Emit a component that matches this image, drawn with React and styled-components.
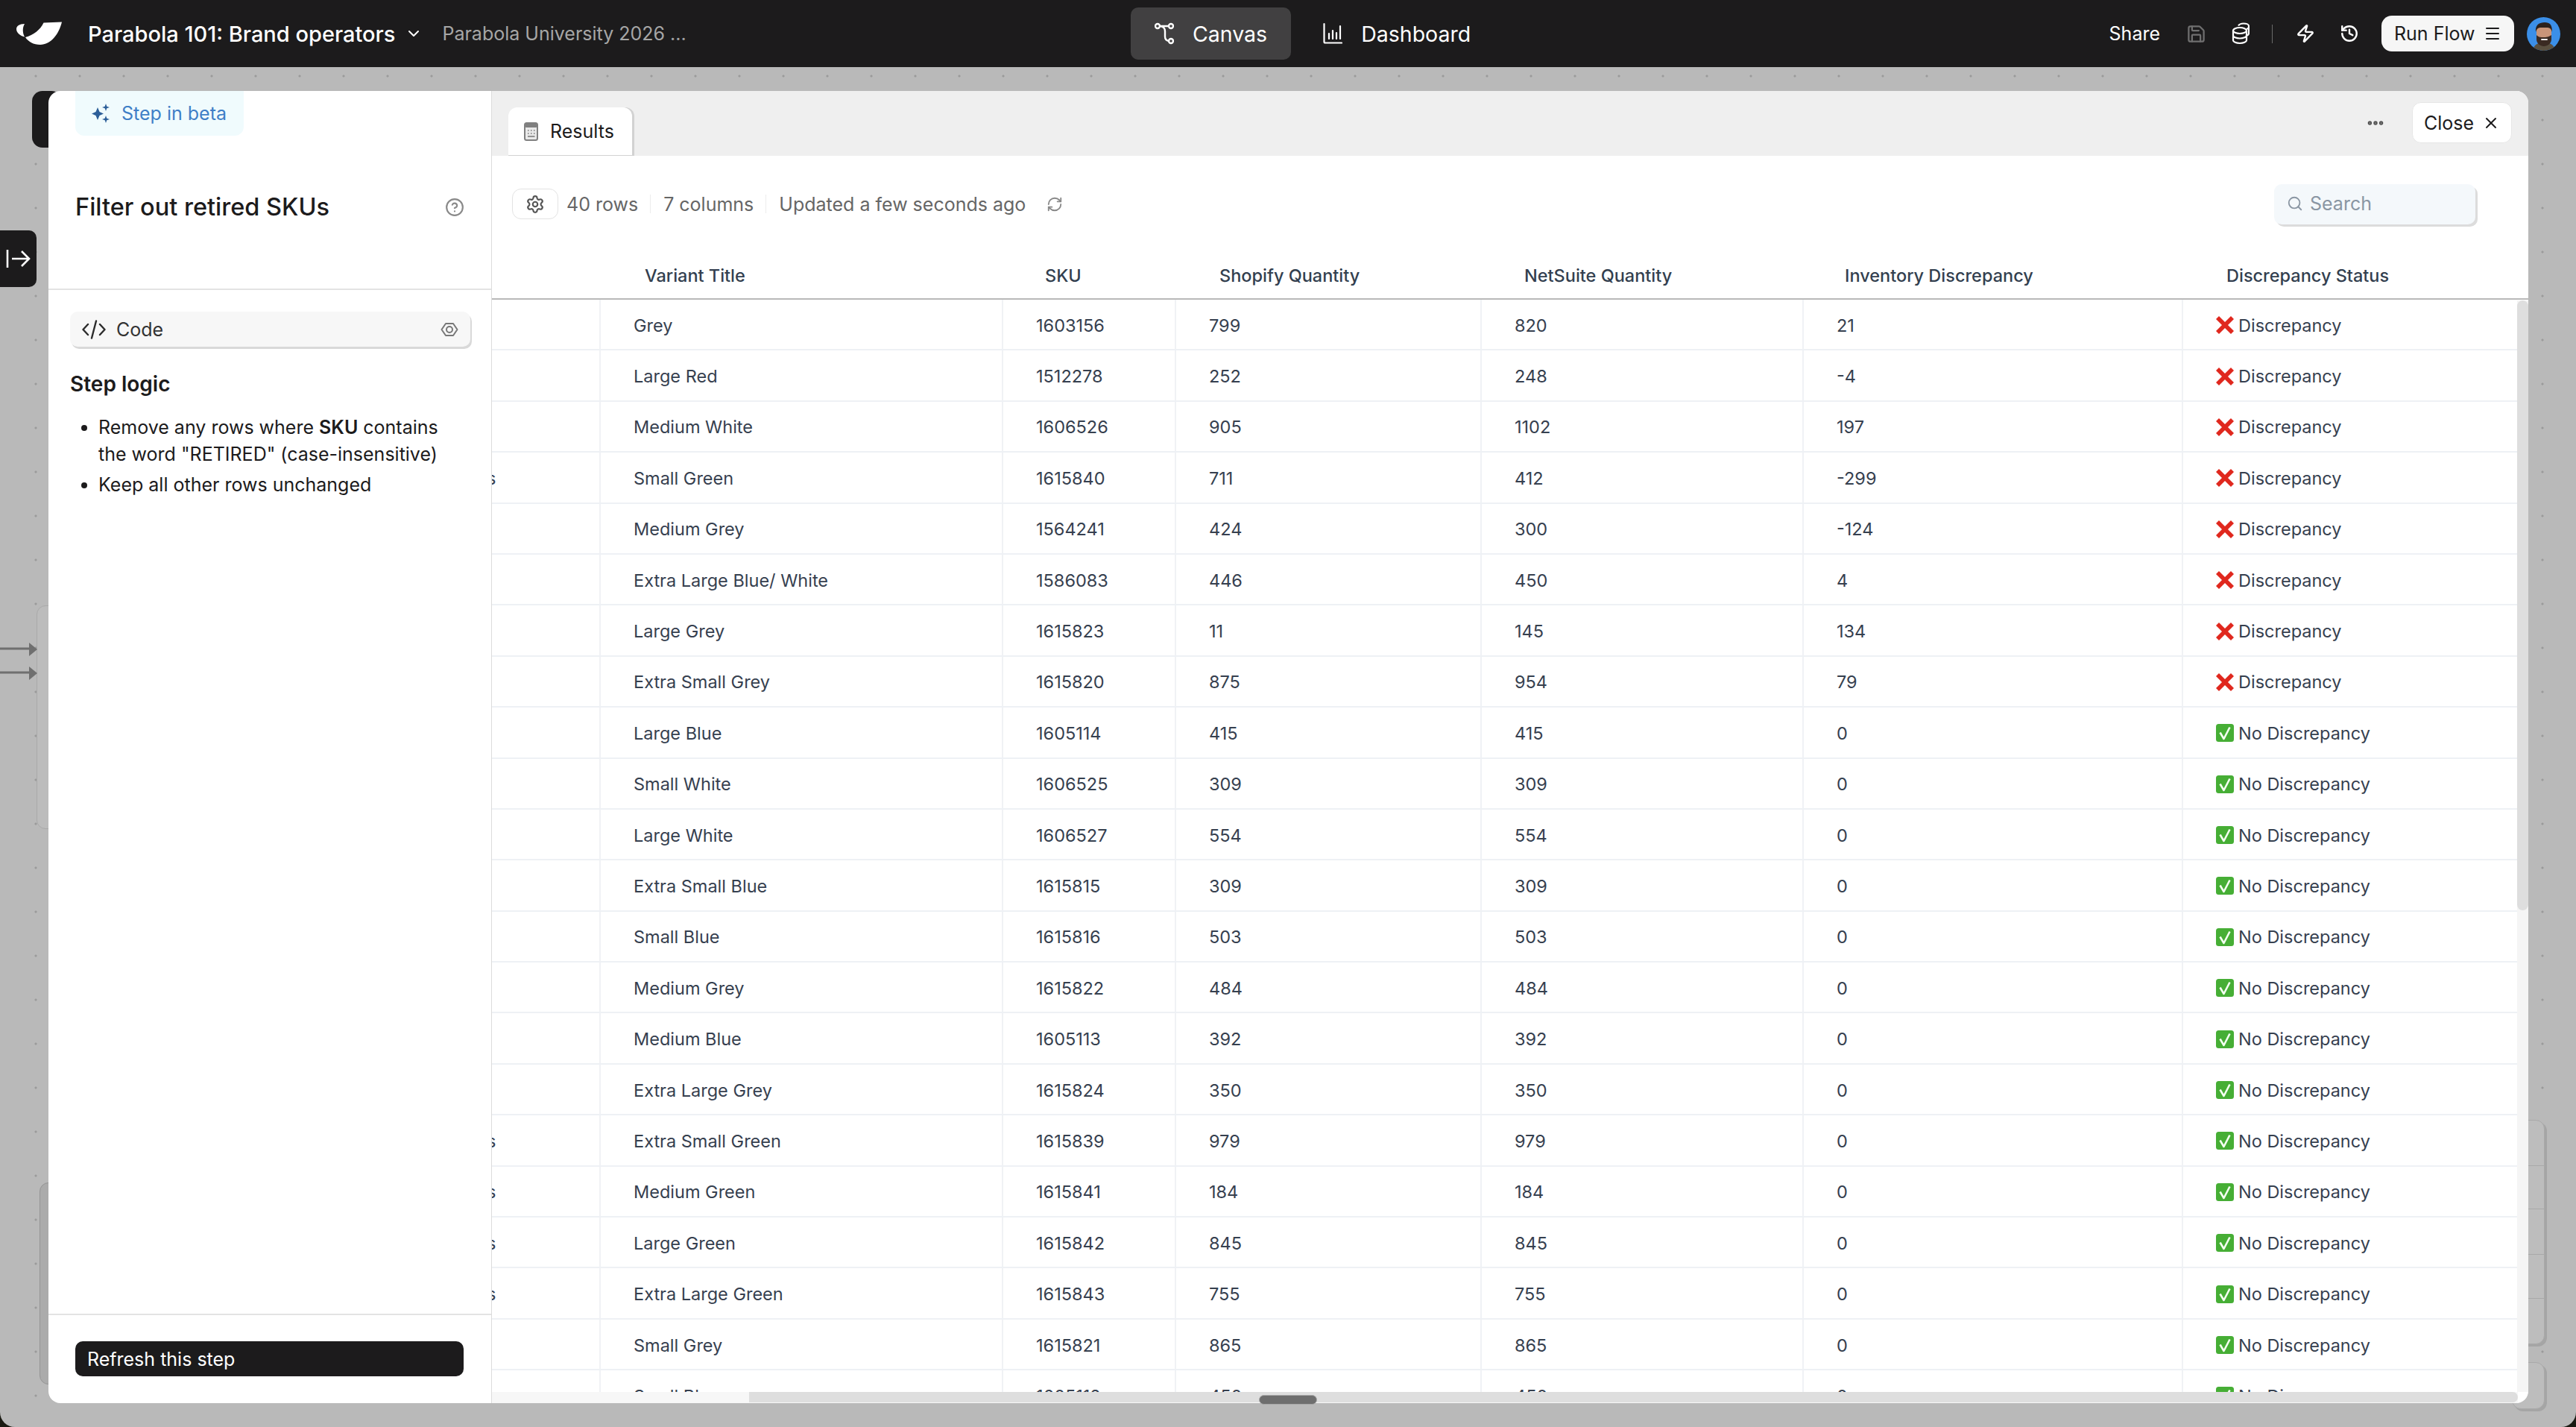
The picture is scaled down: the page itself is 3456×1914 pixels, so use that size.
import React from 'react';
import styled, { createGlobalStyle } from 'styled-components';
import { ChevronDown, Save, Zap, History, Menu, X, Settings, RefreshCw, Search, CircleHelp, MoreHorizontal } from 'lucide-react';

const GlobalStyle = createGlobalStyle`
  html, body { margin: 0; padding: 0; background: #1a1a12; }
  body { font-family: Inter, "Noto Sans", sans-serif; }
  * { box-sizing: border-box; }
`;

const Page = styled.div`
  position: relative;
  width: 3456px;
  height: 1914px;
  display: flex;
  flex-direction: column;
  overflow: hidden;
`;

const Header = styled.header`
  height: 90px;
  flex: none;
  background: #1c1b1c;
  color: #fff;
  display: grid;
  grid-template-columns: 1517px auto 1fr;
  align-items: center;
`;

const Brand = styled.div`
  display: flex;
  align-items: center;
  padding-left: 21px;
`;

const LogoSvg = styled.svg`
  width: 64px;
  height: 34px;
  margin-right: 33px;
`;

const ProjectName = styled.span`
  font-size: 29px;
  font-weight: 500;
  white-space: nowrap;
`;

const ProjectChevron = styled(ChevronDown)`
  margin-left: 13px;
`;

const FolderName = styled.span`
  font-size: 25px;
  color: #a6a6a6;
  margin-left: 26px;
  white-space: nowrap;
`;

const Tabs = styled.nav`
  display: flex;
  align-items: center;
  gap: 11px;
`;

const TabItem = styled.div`
  height: 70px;
  display: flex;
  align-items: center;
  gap: 25px;
  padding: 0 32px;
  border-radius: 10px;
  font-size: 28.5px;
  background: ${(p) => (p.$active ? '#414041' : 'transparent')};
`;

const Actions = styled.div`
  display: flex;
  align-items: center;
  justify-content: flex-end;
  padding-right: 21px;
`;

const ShareLabel = styled.span`
  font-size: 25px;
  margin-right: 35px;
`;

const ActionIcon = styled.span`
  display: flex;
  color: ${(p) => (p.$muted ? '#6f6f6f' : '#fff')};
  margin-right: ${(p) => p.$gap || 0}px;
`;

const ActionDivider = styled.span`
  width: 1px;
  height: 25px;
  background: #6a6a6a;
  margin-right: 31px;
`;

const RunButton = styled.div`
  width: 178px;
  height: 48px;
  margin-right: 17px;
  border-radius: 14px;
  background: #f6f6f6;
  color: #1c1b1c;
  font-size: 25px;
  display: flex;
  align-items: center;
  justify-content: space-between;
  padding: 0 17px;
`;

const Canvas = styled.main`
  flex: 1;
  position: relative;
  overflow: hidden;
  border-radius: 0 0 20px 20px;
  background-color: #b9b9b9;
  background-image: radial-gradient(circle at 48px 12px, #9a9a9a 1.2px, transparent 1.9px);
  background-size: 59px 59px;
`;

const CanvasBlock = styled.div`
  position: absolute;
  left: ${(p) => p.$x}px;
  top: ${(p) => p.$y}px;
  width: ${(p) => p.$w}px;
  height: ${(p) => p.$h}px;
  background: ${(p) => p.$bg || '#bdbdbd'};
  border: ${(p) => p.$line || '1px solid #a9a9a9'};
  border-radius: ${(p) => p.$radius || '12px'};
  box-shadow: ${(p) => p.$shadow || 'none'};
  display: flex;
  align-items: center;
  justify-content: center;
`;

const CanvasRule = styled.div`
  position: absolute;
  left: 0;
  right: 0;
  top: ${(p) => p.$y}px;
  height: 1px;
  background: #a9a9a9;
`;

const ArrowLine = styled.svg`
  position: absolute;
  left: 0;
  top: ${(p) => p.$y}px;
`;

const ToggleIcon = styled.svg`
  margin-left: 10px;
`;

const Modal = styled.section`
  position: absolute;
  left: 65px;
  top: 32px;
  right: 64px;
  bottom: 32px;
  display: flex;
  background: #fff;
  border-radius: 16px;
  overflow: hidden;
`;

const StepPanel = styled.aside`
  width: 595px;
  flex: none;
  display: flex;
  flex-direction: column;
  border-right: 1px solid #dcdcdc;
`;

const StepHead = styled.div`
  height: 267px;
  flex: none;
  border-bottom: 2px solid #e3e3e3;
  padding: 0 36px;
`;

const BetaChip = styled.div`
  width: 226px;
  height: 60px;
  background: #f0fbfd;
  border-radius: 0 0 12px 12px;
  display: flex;
  align-items: center;
  gap: 15px;
  padding-left: 21px;
  color: #3f7fc7;
  font-size: 25px;
`;

const TitleRow = styled.div`
  display: flex;
  align-items: center;
  justify-content: space-between;
  margin-top: 76px;
`;

const StepTitle = styled.h2`
  margin: 0;
  font-size: 32.5px;
  font-weight: 500;
  color: #1c1b1c;
`;

const StepBody = styled.div`
  flex: 1;
  padding: 29px 28px 0 29px;
`;

const CodeBar = styled.div`
  height: 47px;
  background: #f7f7f7;
  border-radius: 10px;
  box-shadow: 2px 3px 0 #d9d9d9;
  display: flex;
  align-items: center;
  padding: 0 16px;
  gap: 14px;
  font-size: 25px;
  color: #333;
`;

const CodeLabel = styled.span`
  flex: 1;
`;

const LogicTitle = styled.h3`
  margin: 33px 0 0;
  font-size: 28px;
  line-height: 34px;
  font-weight: 600;
  color: #1c1b1c;
`;

const LogicList = styled.ul`
  margin: 23px 0 0;
  padding: 0 0 0 38px;
  font-size: 25px;
  line-height: 36px;
  color: #1c1b1c;

  li + li {
    margin-top: 5px;
  }

  b {
    font-weight: 600;
  }
`;

const StepFoot = styled.div`
  height: 120px;
  flex: none;
  border-top: 2px solid #e3e3e3;
  padding: 35px 37px 0 36px;
`;

const RefreshButton = styled.div`
  height: 47px;
  background: #1c1b1c;
  border-radius: 10px;
  color: #fff;
  font-size: 25px;
  display: flex;
  align-items: center;
  padding-left: 16px;
`;

const ResultPanel = styled.div`
  flex: 1;
  min-width: 0;
  display: flex;
  flex-direction: column;
  position: relative;
`;

const ResultBar = styled.div`
  height: 87px;
  flex: none;
  background: #efefef;
  display: flex;
  align-items: flex-end;
  padding-left: 22px;
  padding-right: 22px;
`;

const ResultTab = styled.div`
  width: 166px;
  height: 65px;
  background: #fff;
  border-radius: 12px 12px 0 0;
  box-shadow: 3px 0 0 #d2d2d2;
  border-bottom: 1px solid #d2d2d2;
  display: flex;
  align-items: center;
  gap: 16px;
  padding-left: 21px;
  font-size: 25px;
  color: #1c1b1c;
`;

const BarEnd = styled.div`
  margin-left: auto;
  align-self: flex-start;
  margin-top: 15px;
  display: flex;
  align-items: center;
  gap: 36px;
  color: #555;
`;

const CloseButton = styled.div`
  width: 134px;
  height: 55px;
  background: #fff;
  border: 1px solid #e6e6e6;
  border-radius: 12px;
  display: flex;
  align-items: center;
  justify-content: space-between;
  padding: 0 15px;
  color: #1c1b1c;
  font-size: 25px;
`;

const Toolbar = styled.div`
  height: 129px;
  flex: none;
  display: flex;
  align-items: center;
  padding: 0 71px 0 27px;
  color: #666;
  font-size: 25px;
`;

const GearButton = styled.div`
  width: 62px;
  height: 41px;
  border: 1px solid #e3e3e3;
  border-radius: 12px;
  display: flex;
  align-items: center;
  justify-content: center;
  color: #555;
  margin-right: 11px;
`;

const Meta = styled.span`
  white-space: nowrap;
`;

const MetaRule = styled.span`
  width: 1px;
  height: 25px;
  background: #ececec;
  margin: 0 17px 0 16px;
`;

const ReloadIcon = styled(RefreshCw)`
  margin-left: 28px;
  color: #888;
`;

const SearchBox = styled.div`
  margin-left: auto;
  width: 270px;
  height: 54px;
  background: #f4f8fb;
  border-radius: 10px;
  box-shadow: 3px 3px 0 #dcdcdc;
  display: flex;
  align-items: center;
  gap: 9px;
  padding-left: 17px;
  padding-bottom: 1px;
  color: #8a96a3;
`;

const COLUMNS = '144px 540px 232px 410px 432px 509px 450px';

const HeadRow = styled.div`
  height: 64px;
  flex: none;
  display: grid;
  grid-template-columns: ${COLUMNS};
  border-bottom: 2px solid #b9b9b9;
  font-size: 23.5px;
  font-weight: 500;
  color: #333f4f;
  align-items: center;
`;

const HeadCell = styled.div`
  padding-left: ${(p) => p.$pad}px;
  white-space: nowrap;
`;

const TableBody = styled.div`
  height: 1465px;
  overflow: hidden;
`;

const Row = styled.div`
  width: 2717px;
  height: 68.4px;
  display: grid;
  grid-template-columns: ${COLUMNS};
  border-bottom: 2px solid #eef1f5;
  font-size: 23.5px;
  color: #36404f;
`;

const Cell = styled.div`
  display: flex;
  align-items: center;
  gap: 6px;
  padding: 2px 0 0 44px;
  border-left: 2px solid #f0f2f5;
  white-space: nowrap;
`;

const ClippedCell = styled.div`
  display: flex;
  align-items: center;
  overflow: hidden;
  padding-top: 2px;
  text-indent: -7px;
`;

const ScrollTrackY = styled.div`
  position: absolute;
  right: 0;
  top: 281px;
  bottom: 15px;
  width: 15px;
  background: #f5f5f5;
`;

const ScrollThumbY = styled.div`
  height: 818px;
  background: #dedede;
  border-radius: 8px;
`;

const ScrollTrackX = styled.div`
  position: absolute;
  left: 0;
  right: 14px;
  bottom: 0;
  height: 15px;
  background: #f7f7f7;
`;

const ScrollRail = styled.div`
  position: absolute;
  left: 345px;
  right: 0;
  top: 0;
  bottom: 1px;
  background: #dedede;
  border-radius: 0 8px 8px 0;
`;

const ScrollThumbX = styled.div`
  position: absolute;
  left: 1689px;
  top: 1871px;
  width: 78px;
  height: 13px;
  background: #6e6e6e;
  border: 1px solid #a8a8a8;
  border-radius: 7px;
`;

const Logo = () => (
  <LogoSvg viewBox="0 0 64 34">
    <path fill="#fff" d="M62 1.5 L37.5 2.5 C33 12 24 19 13 22 C17 28 24 32 33 32 C47 32 58 18 62 1.5 Z" />
    <path fill="#fff" d="M12 4 C5 4 1 7 1 11 C1 16 6 20 12 21.5 C9 16 9 9 12 4 Z" />
  </LogoSvg>
);

const CanvasIcon = () => (
  <svg width="26" height="30" viewBox="0 0 26 30" fill="none" stroke="#fff" strokeWidth="2.4">
    <circle cx="4" cy="5" r="3" />
    <circle cx="22" cy="5" r="3" />
    <circle cx="22" cy="25" r="3" />
    <path d="M7 5h12M7.5 5c5 1 6.5 3 6.5 7v7c0 3 2 5.5 5 6" />
  </svg>
);

const DashIcon = () => (
  <svg width="26" height="30" viewBox="0 0 26 30" fill="none" stroke="#fff" strokeWidth="2.2" strokeLinecap="round">
    <path d="M1.5 2v24c0 1 .5 1.5 1.5 1.5h22" />
    <path d="M8 15v7M13 11v11M18 14v8M23 5v17" />
  </svg>
);

const CoinsIcon = () => (
  <svg width="24" height="30" viewBox="0 0 24 30" fill="none" stroke="#fff" strokeWidth="2.2">
    <ellipse cx="11" cy="11" rx="9" ry="4" />
    <path d="M2 11v13c0 2.2 4 4 9 4s9-1.8 9-4V11M2 17.5c0 2.2 4 4 9 4s9-1.800 9-4" />
    <path d="M9 4.500C10 2.800 13 1.500 16 1.500c4 0 7 1.500 7 3.500v10c0 1.300-1 2.300-3 3M20 9c2-.5 3-1.500 3-3" />
  </svg>
);

const SparkIcon = () => (
  <svg width="26" height="26" viewBox="0 0 26 26" fill="#2d5f99">
    <path d="M9 5 L11.500 11 L17 13.500 L11.500 16 L9 22 L6.500 16 L1 13.500 L6.500 11 Z" />
    <path d="M20 0 L21.300 3.700 L25 5 L21.300 6.300 L20 10 L18.700 6.300 L15 5 L18.700 3.700 Z" />
    <path d="M20 16 L21.300 19.700 L25 21 L21.300 22.300 L20 26 L18.700 22.300 L15 21 L18.700 19.700 Z" />
  </svg>
);

const CodeIcon = () => (
  <svg width="32" height="26" viewBox="0 0 32 26" fill="none" stroke="#2c2c2c" strokeWidth="2.4" strokeLinecap="round" strokeLinejoin="round">
    <path d="M8 6 L1.500 13 L8 20M24 6 L30.500 13 L24 20M19 1.500 L13 24.500" />
  </svg>
);

const ViewIcon = () => (
  <svg width="24" height="20" viewBox="0 0 24 20" fill="none" stroke="#777" strokeWidth="2">
    <path d="M1.500 10 L7 2 H17 L22.500 10 L17 18 H7 Z" strokeLinejoin="round" />
    <circle cx="12" cy="10" r="4" />
  </svg>
);

const SheetIcon = () => (
  <svg width="19" height="25" viewBox="0 0 19 25" fill="none">
    <rect x="1" y="1" width="17" height="23" rx="2.500" fill="#e9e9e9" stroke="#808080" strokeWidth="2" />
    <rect x="1" y="1" width="17" height="6" rx="2" fill="#808080" />
    <path d="M5 11h1.500M9 11h1.500M13 11h1.500M5 15h1.500M9 15h1.500M13 15h1.500M5 19h9.500" stroke="#777" strokeWidth="1.600" />
  </svg>
);

const CrossEmoji = () => (
  <svg width="24" height="24" viewBox="0 0 24 24">
    <path d="M4 0 L12 8 L20 0 L24 4 L16 12 L24 20 L20 24 L12 16 L4 24 L0 20 L8 12 L0 4 Z" fill="#e0281e" />
  </svg>
);

const CheckEmoji = () => (
  <svg width="24" height="24" viewBox="0 0 24 24">
    <rect width="24" height="24" rx="3.500" fill="#46ae35" />
    <path d="M5.500 11.500 L10.500 20 L18.500 4.500" fill="none" stroke="#f4fff1" strokeWidth="2.600" strokeLinejoin="round" />
  </svg>
);

const Avatar = () => (
  <svg width="45" height="45" viewBox="0 0 45 45">
    <clipPath id="avatar-clip"><circle cx="22.500" cy="22.500" r="22.500" /></clipPath>
    <g clipPath="url(#avatar-clip)">
      <rect width="45" height="45" fill="#3b8fe8" />
      <path d="M8 45c1-8 7-11 15-11s14 3 15 11z" fill="#5a5040" />
      <path d="M13 14h20v14c0 6-5 10-10 10S13 34 13 28z" fill="#c99579" />
      <path d="M13 24c3 3 5 3 10 3s7-1 10-3v6c0 5-5 9-10 9S13 35 13 30z" fill="#3a2a22" />
      <path d="M12 20c-1-10 5-13 12-13s10 3 10 13c-1-4-3-6-6-6H18c-3 0-5 2-6 6z" fill="#2c211c" />
      <rect x="19" y="29" width="9" height="2" rx="1" fill="#eee" />
    </g>
  </svg>
);

const ROWS = [
  ['Grey', '1603156', '799', '820', '21', false],
  ['Large Red', '1512278', '252', '248', '-4', false],
  ['Medium White', '1606526', '905', '1102', '197', false],
  ['Small Green', '1615840', '711', '412', '-299', false, true],
  ['Medium Grey', '1564241', '424', '300', '-124', false],
  ['Extra Large Blue/ White', '1586083', '446', '450', '4', false],
  ['Large Grey', '1615823', '11', '145', '134', false],
  ['Extra Small Grey', '1615820', '875', '954', '79', false],
  ['Large Blue', '1605114', '415', '415', '0', true],
  ['Small White', '1606525', '309', '309', '0', true],
  ['Large White', '1606527', '554', '554', '0', true],
  ['Extra Small Blue', '1615815', '309', '309', '0', true],
  ['Small Blue', '1615816', '503', '503', '0', true],
  ['Medium Grey', '1615822', '484', '484', '0', true],
  ['Medium Blue', '1605113', '392', '392', '0', true],
  ['Extra Large Grey', '1615824', '350', '350', '0', true],
  ['Extra Small Green', '1615839', '979', '979', '0', true, true],
  ['Medium Green', '1615841', '184', '184', '0', true, true],
  ['Large Green', '1615842', '845', '845', '0', true, true],
  ['Extra Large Green', '1615843', '755', '755', '0', true, true],
  ['Small Grey', '1615821', '865', '865', '0', true],
  ['Small Blue', '1605112', '450', '450', '0', true],
];

const HEADS = [
  ['', 0],
  ['Variant Title', 61],
  ['SKU', 58],
  ['Shopify Quantity', 60],
  ['NetSuite Quantity', 59],
  ['Inventory Discrepancy', 57],
  ['Discrepancy Status', 60],
];

const App = () => {
  return (
    <Page>
      <GlobalStyle />
      <Header>
        <Brand>
          <Logo />
          <ProjectName>Parabola 101: Brand operators</ProjectName>
          <ProjectChevron size={24} strokeWidth={2} />
          <FolderName>Parabola University 2026 ...</FolderName>
        </Brand>
        <Tabs>
          <TabItem $active><CanvasIcon />Canvas</TabItem>
          <TabItem><DashIcon />Dashboard</TabItem>
        </Tabs>
        <Actions>
          <ShareLabel>Share</ShareLabel>
          <ActionIcon $muted $gap={34}><Save size={27} strokeWidth={2} /></ActionIcon>
          <ActionIcon $gap={30}><CoinsIcon /></ActionIcon>
          <ActionDivider />
          <ActionIcon $gap={33}><Zap size={26} strokeWidth={2.2} /></ActionIcon>
          <ActionIcon $gap={30}><History size={26} strokeWidth={2.2} /></ActionIcon>
          <RunButton>Run Flow<Menu size={24} strokeWidth={2} /></RunButton>
          <Avatar />
        </Actions>
      </Header>

      <Canvas>
        <CanvasBlock $x={43} $y={32} $w={40} $h={76} $bg="#1c1b1c" $line="none" $radius="14px" />
        <CanvasBlock $x={-10} $y={219} $w={59} $h={76} $bg="#1c1b1c" $line="none" $radius="10px">
          <ToggleIcon width="34" height="26" viewBox="0 0 34 26" fill="none" stroke="#fff" strokeWidth="2.600">
            <path d="M2 1v24M8 13h23M21 3l10 10-10 10" />
          </ToggleIcon>
        </CanvasBlock>
        <CanvasBlock $x={49} $y={722} $w={40} $h={300} $bg="#bcbcbc" />
        <ArrowLine $y={770} width="51" height="22" viewBox="0 0 51 22">
          <path d="M0 10h42" stroke="#6f6f6f" strokeWidth="3" />
          <path d="M39 2l11 9-11 9z" fill="#6f6f6f" />
        </ArrowLine>
        <ArrowLine $y={802} width="51" height="22" viewBox="0 0 51 22">
          <path d="M0 10h42" stroke="#6f6f6f" strokeWidth="3" />
          <path d="M39 2l11 9-11 9z" fill="#6f6f6f" />
        </ArrowLine>
        <CanvasBlock $x={53} $y={1496} $w={40} $h={271} $bg="#ababab" $line="1px solid #959595" />
        <CanvasBlock $x={3370} $y={1412} $w={44} $h={301} $shadow="3px 3px 0 #a5a5a5">
          <CanvasRule $y={60} />
          <CanvasRule $y={118} />
          <CanvasRule $y={179} />
          <CanvasRule $y={238} />
        </CanvasBlock>
        <CanvasBlock $x={3370} $y={1737} $w={44} $h={63} $shadow="3px 3px 0 #a5a5a5" />

        <Modal>
          <StepPanel>
            <StepHead>
              <BetaChip><SparkIcon />Step in beta</BetaChip>
              <TitleRow>
                <StepTitle>Filter out retired SKUs</StepTitle>
                <CircleHelp size={26} color="#8a8a8a" strokeWidth={2} />
              </TitleRow>
            </StepHead>
            <StepBody>
              <CodeBar>
                <CodeIcon />
                <CodeLabel>Code</CodeLabel>
                <ViewIcon />
              </CodeBar>
              <LogicTitle>Step logic</LogicTitle>
              <LogicList>
                <li>Remove any rows where <b>SKU</b> contains the word "RETIRED" (case-insensitive)</li>
                <li>Keep all other rows unchanged</li>
              </LogicList>
            </StepBody>
            <StepFoot>
              <RefreshButton>Refresh this step</RefreshButton>
            </StepFoot>
          </StepPanel>

          <ResultPanel>
            <ResultBar>
              <ResultTab><SheetIcon />Results</ResultTab>
              <BarEnd>
                <MoreHorizontal size={26} strokeWidth={3} />
                <CloseButton>Close<X size={24} strokeWidth={2} /></CloseButton>
              </BarEnd>
            </ResultBar>
            <Toolbar>
              <GearButton><Settings size={26} strokeWidth={2} /></GearButton>
              <Meta>40 rows</Meta>
              <MetaRule />
              <Meta>7 columns</Meta>
              <MetaRule />
              <Meta>Updated a few seconds ago</Meta>
              <ReloadIcon size={22} strokeWidth={2} />
              <SearchBox><Search size={22} strokeWidth={2} />Search</SearchBox>
            </Toolbar>
            <HeadRow>
              {HEADS.map(([label, pad]) => (
                <HeadCell key={label} $pad={pad}>{label}</HeadCell>
              ))}
            </HeadRow>
            <TableBody>
              {ROWS.map((row, i) => (
                <Row key={i}>
                  <ClippedCell>{row[6] ? 's' : ''}</ClippedCell>
                  <Cell>{row[0]}</Cell>
                  <Cell>{row[1]}</Cell>
                  <Cell>{row[2]}</Cell>
                  <Cell>{row[3]}</Cell>
                  <Cell>{row[4]}</Cell>
                  <Cell>
                    {row[5] ? <CheckEmoji /> : <CrossEmoji />}
                    {row[5] ? 'No Discrepancy' : 'Discrepancy'}
                  </Cell>
                </Row>
              ))}
            </TableBody>
            <ScrollTrackY><ScrollThumbY /></ScrollTrackY>
            <ScrollTrackX><ScrollRail /></ScrollTrackX>
          </ResultPanel>
        </Modal>
      </Canvas>
      <ScrollThumbX />
    </Page>
  );
};

export default App;
